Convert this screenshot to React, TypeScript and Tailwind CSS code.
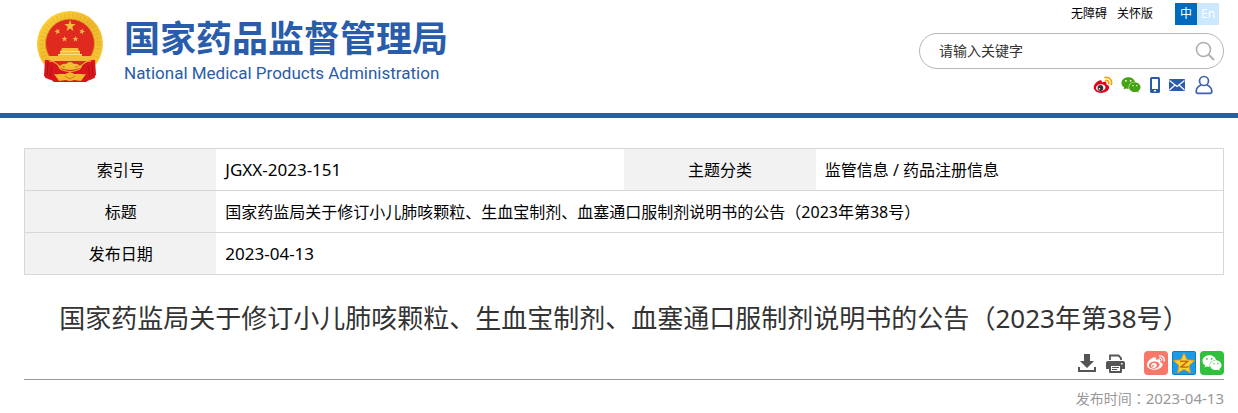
import type { ReactNode } from "react";
import { FaWeibo, FaWeixin } from "react-icons/fa";

interface SocialLink {
  id: string;
  label: string;
  icon: ReactNode;
}

const SOCIAL_LINKS: SocialLink[] = [
  { id: "weibo", label: "微博", icon: <WeiboGlyph /> },
  {
    id: "wechat",
    label: "微信",
    icon: <FaWeixin className="ml-2 h-[18px] w-5 text-[#45a412]" />,
  },
  { id: "mobile", label: "手机版", icon: <PhoneGlyph /> },
  { id: "mail", label: "邮箱", icon: <MailGlyph /> },
  { id: "user", label: "个人中心", icon: <UserGlyph /> },
];

export default function App() {
  return (
    <div
      lang="zh-CN"
      className="bg-white font-['Noto_Sans','Noto_Sans_CJK_SC',sans-serif] text-black"
    >
      <SiteHeader />
      <main className="pt-[30px] pr-3.5 pl-6">
        <InfoTable />
        <h1 className="mt-[22px] text-center text-[26px] leading-10 text-[#333]">
          <NoticeTitle />
        </h1>
        <ShareBar />
        <p className="mt-1.5 text-right text-[14px] leading-6 text-[#999]">
          发布时间<Mark>：</Mark>
          <time dateTime="2023-04-13" className="text-[15px]">
            2023-04-13
          </time>
        </p>
      </main>
    </div>
  );
}

// Full-width punctuation centred in its cell.
function Mark({ children }: { children: ReactNode }) {
  return (
    <span lang="zh-TW" className="font-['Noto_Sans_CJK_TC',sans-serif]">
      {children}
    </span>
  );
}

function NoticeTitle() {
  return (
    <>
      国家药监局关于修订小儿肺咳颗粒、生血宝制剂、血塞通口服制剂说明书的公告
      <Mark>（</Mark>2023年第38号<Mark>）</Mark>
    </>
  );
}

function SiteHeader() {
  return (
    <header className="flex h-[118px] justify-between border-b-5 border-[#295cab] pr-3.5 pl-9">
      <a href="#home" className="mt-2.5 flex items-start text-[#295cab]">
        <Emblem />
        <span className="ml-5 block pt-[9px]">
          <span className="block text-[36px] leading-10 font-bold whitespace-nowrap">
            国家药品监督管理局
          </span>
          <span className="block font-[Roboto,sans-serif] text-[17px] leading-7 whitespace-nowrap">
            National Medical Products Administration
          </span>
        </span>
      </a>
      <div className="flex w-[305px] flex-col items-end">
        <nav className="mt-[3px] mr-[5px] flex items-center text-[12px] leading-[22px]">
          <a href="#accessible">无障碍</a>
          <a href="#care" className="ml-2.5">
            关怀版
          </a>
          <a
            href="#zh"
            className="ml-[22px] w-[22px] bg-[#006bbd] text-center text-white"
          >
            中
          </a>
          <a href="#en" className="w-[22px] bg-[#cce8ff] text-center text-white">
            En
          </a>
        </nav>
        <form
          role="search"
          className="mt-2 flex h-9 w-full items-center rounded-full border border-[#b5b5b5] pr-2 pl-[19px]"
        >
          <input
            type="text"
            aria-label="请输入关键字"
            placeholder="请输入关键字"
            className="min-w-0 flex-1 text-[14px] leading-5 outline-none placeholder:text-[#333]"
          />
          <button type="button" aria-label="搜索">
            <SearchGlyph />
          </button>
        </form>
        <ul className="mt-1.5 mr-[11px] flex h-5 items-center">
          {SOCIAL_LINKS.map((s) => (
            <li key={s.id}>
              <a href={`#${s.id}`} aria-label={s.label} className="block">
                {s.icon}
              </a>
            </li>
          ))}
        </ul>
      </div>
    </header>
  );
}

function InfoTable() {
  const th = "bg-[#f2f2f2] text-center font-normal";
  const td = "px-[9px]";
  const row = "h-[42px] border border-[#d7d7d7]";
  return (
    <table className="w-full table-fixed border-collapse text-[16px] leading-6">
      <colgroup>
        <col className="w-[16%]" />
        <col className="w-[34%]" />
        <col className="w-[16%]" />
        <col className="w-[34%]" />
      </colgroup>
      <tbody>
        <tr className={row}>
          <th scope="row" className={th}>
            索引号
          </th>
          <td className={`${td} text-[17px]`}>JGXX-2023-151</td>
          <th scope="row" className={th}>
            主题分类
          </th>
          <td className={td}>监管信息 / 药品注册信息</td>
        </tr>
        <tr className={row}>
          <th scope="row" className={th}>
            标题
          </th>
          <td colSpan={3} className={td}>
            <NoticeTitle />
          </td>
        </tr>
        <tr className={row}>
          <th scope="row" className={th}>
            发布日期
          </th>
          <td colSpan={3} className={`${td} text-[17px]`}>
            2023-04-13
          </td>
        </tr>
      </tbody>
    </table>
  );
}

function ShareBar() {
  return (
    <div className="mt-[13px] flex h-[29px] items-start justify-end border-b border-[#999]">
      <button type="button" aria-label="下载" className="mt-[3px]">
        <DownloadGlyph />
      </button>
      <button type="button" aria-label="打印" className="mt-[3px] ml-2.5">
        <PrinterGlyph />
      </button>
      <div className="ml-[19px] flex gap-1">
        <button
          type="button"
          aria-label="分享到微博"
          className="flex size-6 items-center justify-center rounded-sm bg-[#f77768] text-white"
        >
          <FaWeibo className="size-[18px]" />
        </button>
        <button type="button" aria-label="分享到QQ空间">
          <QzoneGlyph />
        </button>
        <button
          type="button"
          aria-label="分享到微信"
          className="flex size-6 items-center justify-center rounded-sm bg-[#30c13c] text-white"
        >
          <FaWeixin className="size-5" />
        </button>
      </div>
    </div>
  );
}

function Emblem() {
  return (
    <svg width="68" height="72" viewBox="0 0 68 72" aria-hidden>
      <defs>
        <linearGradient id="gold" x1="0" y1="0" x2="1" y2="1">
          <stop offset="0" stopColor="#ffd83c" />
          <stop offset="0.5" stopColor="#f0b92c" />
          <stop offset="1" stopColor="#f9cf3a" />
        </linearGradient>
        <path
          id="star"
          d="M0-6 1.4-1.9H5.7L2.3.7 3.5 4.9 0 2.4-3.5 4.9-2.3.7-5.7-1.9h4.3z"
        />
      </defs>
      <path d="m12 49-3 19 5 1 4 3h32l5-3 4-1-3-19z" fill="#d3161b" />
      <circle cx="34" cy="34" r="33" fill="url(#gold)" />
      <circle
        cx="34"
        cy="34"
        r="28.5"
        fill="none"
        stroke="#c98b18"
        strokeOpacity="0.2"
        strokeWidth="5"
        strokeDasharray="2 2"
      />
      <circle cx="34" cy="33.5" r="24.5" fill="#e02a20" stroke="#d99a1c" />
      <g fill="#f7bd3a">
        <use href="#star" x="34" y="16" />
        <use href="#star" transform="translate(21.5 21.5) rotate(-15) scale(.52)" />
        <use href="#star" transform="translate(46 21.5) rotate(15) scale(.52)" />
        <use href="#star" transform="translate(28.5 29) scale(.52)" />
        <use href="#star" transform="translate(39.5 29) scale(.52)" />
        <path d="M26 38h16l1 3H25zM24 42h20v2h2v4H22v-4h2zM11 46h46q-1 3-3 5H14q-2-2-3-5z" />
      </g>
      <path d="M24 41.5h20M22 44.5h24" stroke="#fbe07a" />
      <path
        d="M9 50q9-1 15 8 10 4 20 0 6-9 15-8l1 15-5 5-9-6H22l-8 6-6-4z"
        fill="#d8161b"
      />
      <path
        d="m12 53-1 13m5-10-2 12m42-15 1 13m-5-10 2 12"
        stroke="#9e0e14"
        strokeOpacity="0.6"
      />
      <path
        d="M24 57q2-4 6-3 4-4 8 0 4-1 6 3l-4-1q-1 3-4 2l-2 2-2-2q-3 1-4-2z"
        fill="#f5bf34"
      />
      <path d="M13 51q8 0 11 8 10 5 20 0 3-8 11-8" fill="none" stroke="#f5bf34" />
      <path
        d="m18 64 9 1 7-3 7 3 9-1-5 7-7-1q-4 2-8 0l-7 1z"
        fill="#f3b72c"
      />
      <path d="m29 66 5 3 5-3" fill="none" stroke="#c88316" />
    </svg>
  );
}

function SearchGlyph() {
  return (
    <svg width="20" height="20" viewBox="0 0 20 20" fill="none" stroke="#b0b0b0" aria-hidden>
      <circle cx="8.5" cy="8.5" r="7" strokeWidth="1.6" />
      <path d="m13.5 13.5 5.500 5.500" strokeWidth="2" />
    </svg>
  );
}

function WeiboGlyph() {
  return (
    <svg width="20" height="18" viewBox="0 0 20 18" aria-hidden>
      <path
        d="M.7 11.3C.7 8 5.5 3.5 8 4.2c1 .3 1 1.4.7 2.2 2-.9 4.5-1 4.8.7.1.6 0 1-.2 1.500 1.700.5 3 1.400 2.800 3.200-.3 3-4.100 5.200-7.900 5.200S.7 14.700.7 11.300z"
        fill="#e1001a"
      />
      <ellipse cx="7.7" cy="11.7" rx="4.8" ry="3.4" fill="#fff" transform="rotate(-8 7.7 11.7)" />
      <circle cx="7.4" cy="12" r="2.9" fill="#3a3030" />
      <circle cx="6.4" cy="12.8" r="0.8" fill="#fff" />
      <path
        d="M12.6 4.5c2-.5 3.700 1 3.100 3.200M12 1.500c4.200-.8 7.500 2.500 6.300 6.800"
        fill="none"
        stroke="#eda500"
        strokeWidth="1.7"
        strokeLinecap="round"
      />
    </svg>
  );
}

function PhoneGlyph() {
  return (
    <svg width="10" height="16" viewBox="0 0 10 16" className="ml-[9px]" aria-hidden>
      <rect width="10" height="16" rx="1.5" fill="#295cab" />
      <path d="M2 2h6v10H2z" fill="#fff" />
      <path d="M4 13h2v1.500H4z" fill="#fff" />
    </svg>
  );
}

function MailGlyph() {
  return (
    <svg width="16" height="12" viewBox="0 0 16 12" className="ml-[9px]" aria-hidden>
      <rect width="16" height="12" rx="1" fill="#295cab" />
      <path
        d="m.5 1.500 7.500 6 7.500-6M.5 11 6 6m9.500 5L10 6"
        fill="none"
        stroke="#fff"
        strokeWidth="1.2"
      />
    </svg>
  );
}

function UserGlyph() {
  return (
    <svg
      width="18"
      height="20"
      viewBox="0 0 18 20"
      className="ml-2.5"
      fill="none"
      stroke="#3f62ad"
      strokeWidth="1.7"
      aria-hidden
    >
      <circle cx="9" cy="6" r="4.5" />
      <path d="M6 10c-3 1.200-4.800 3.700-4.800 6.500 0 1.200.6 1.800 1.800 1.800h12c1.200 0 1.800-.6 1.800-1.800 0-2.800-1.800-5.300-4.800-6.500" />
    </svg>
  );
}

function DownloadGlyph() {
  return (
    <svg width="18" height="18" viewBox="0 0 18 18" fill="#555" aria-hidden>
      <path d="M6 0h6v7h4l-7 7-7-7h4z" />
      <path d="M0 13h2v3h14v-3h2v5H0z" />
    </svg>
  );
}

function PrinterGlyph() {
  return (
    <svg width="19" height="19" viewBox="0 0 19 19" aria-hidden>
      <path d="M4 6V1.500h8.500L15 4v2" fill="none" stroke="#555" strokeWidth="1.8" />
      <path
        d="M2 7h15q2 0 2 2v6h-3v3q0 1-1 1H4q-1 0-1-1v-3H0V9q0-2 2-2z"
        fill="#555"
      />
      <path d="M5 12h9v5H5zM15 9h1.500v1.500H15z" fill="#fff" />
      <path d="M6 13.500h7m-7 2h5" stroke="#555" />
    </svg>
  );
}

function QzoneGlyph() {
  return (
    <svg width="24" height="24" viewBox="0 0 24 24" aria-hidden>
      <rect width="24" height="24" rx="2" fill="#0b7ecb" />
      <rect x="1" y="1" width="22" height="22" rx="1" fill="#1b9ae8" />
      <path
        d="m12 2 3 6.700 7.500.8-5.500 5 1.500 7.500-6.500-3.700L5.500 22 7 14.500l-5.500-5L9 8.700z"
        fill="#ffce2b"
        stroke="#e79a12"
        strokeWidth="0.8"
        strokeLinejoin="round"
      />
      <path
        d="M8 10.500q4-.8 7.500 0L9 15.800q4 .8 7.500-.2"
        fill="none"
        stroke="#b8640c"
        strokeWidth="1.4"
      />
    </svg>
  );
}
